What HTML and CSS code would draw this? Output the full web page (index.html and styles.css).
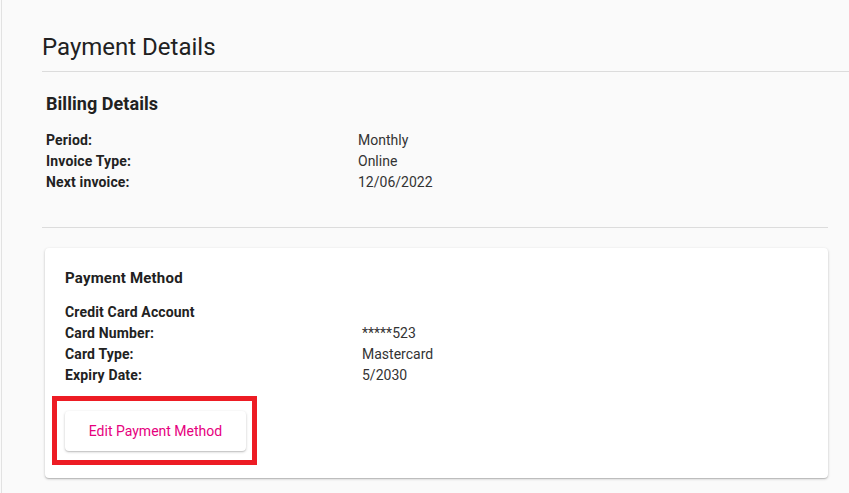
FILE: index.html
```html
<!DOCTYPE html>
<html lang="en">
<head>
<meta charset="utf-8">
<title>Payment Details</title>
<link rel="stylesheet" href="styles.css">
</head>
<body>
<div class="page">
  <header class="page-header">
    <h1 class="page-title">Payment Details</h1>
  </header>
  <main class="content">
    <section class="billing">
      <h2 class="section-title">Billing Details</h2>
      <dl class="details billing-details">
        <dt>Period:</dt><dd>Monthly</dd>
        <dt>Invoice Type:</dt><dd>Online</dd>
        <dt>Next invoice:</dt><dd>12/06/2022</dd>
      </dl>
    </section>
    <hr class="divider">
    <section class="card">
      <h3 class="card-title">Payment Method</h3>
      <dl class="details card-details">
        <dt class="full">Credit Card Account</dt>
        <dt>Card Number:</dt><dd>*****523</dd>
        <dt>Card Type:</dt><dd>Mastercard</dd>
        <dt>Expiry Date:</dt><dd>5/2030</dd>
      </dl>
      <div class="button-wrap">
        <button class="btn" type="button">Edit Payment Method</button>
      </div>
    </section>
  </main>
</div>
</body>
</html>
```

FILE: styles.css
```css
* { box-sizing: border-box; }

html, body {
  margin: 0;
  padding: 0;
  height: 100%;
}

body {
  background: #fafafa;
  font-family: Roboto, "Liberation Sans", Arial, sans-serif;
  color: #212121;
  border-left: 1px solid #e2e2e2;
  margin-left: 1px;
  overflow: hidden;
}

.page {
  padding-top: 31px;
}

.page-header {
  margin-left: 40px;
  border-bottom: 1px solid #dcdcdc;
  padding-bottom: 8px;
}

.page-title {
  margin: 0;
  font-size: 24px;
  line-height: 32px;
  font-weight: 400;
  color: #212121;
}

.content {
  margin-left: 40px;
  margin-right: 21px;
  padding-top: 20px;
}

.billing {
  padding-left: 4px;
}

.section-title {
  margin: 0 0 14px;
  font-size: 18px;
  line-height: 24px;
  font-weight: 700;
  letter-spacing: 0.05px;
  color: #212121;
}

.details {
  display: grid;
  margin: 0;
  font-size: 14px;
  line-height: 21px;
}

.details dt {
  font-weight: 700;
  letter-spacing: 0.15px;
  color: #222;
}

.details dt.full {
  grid-column: 1 / -1;
}

.details dd {
  margin: 0;
  color: #333;
}

.billing-details {
  grid-template-columns: 312px 1fr;
}

.divider {
  margin: 34px 0 0;
  border: 0;
  border-top: 1px solid #dcdcdc;
  height: 0;
}

.card {
  margin: 20px 0 0 3px;
  background: #fff;
  border-radius: 4px;
  box-shadow: 0 1px 3px rgba(0, 0, 0, 0.2), 0 1px 1px rgba(0, 0, 0, 0.14);
  padding: 18px 20px 28px;
  height: 230px;
}

.card-title {
  margin: 0 0 12px;
  font-size: 15px;
  line-height: 24px;
  font-weight: 700;
  letter-spacing: 0.2px;
  color: #212121;
}

.card-details {
  grid-template-columns: 297px 1fr;
}

.button-wrap {
  position: relative;
  display: inline-block;
  margin-top: 25px;
}

.button-wrap::before {
  content: "";
  position: absolute;
  top: -15px;
  left: -13px;
  right: -11px;
  bottom: -14px;
  border: 5px solid #ed1c24;
  pointer-events: none;
}

.btn {
  display: block;
  width: 181px;
  height: 40px;
  border: 0;
  border-radius: 4px;
  background: #fff;
  box-shadow: 0 1px 3px rgba(0, 0, 0, 0.2), 0 1px 1px rgba(0, 0, 0, 0.1);
  font-family: Roboto, "Liberation Sans", Arial, sans-serif;
  font-size: 14px;
  font-weight: 400;
  color: #e6007e;
  padding: 0;
}
```
